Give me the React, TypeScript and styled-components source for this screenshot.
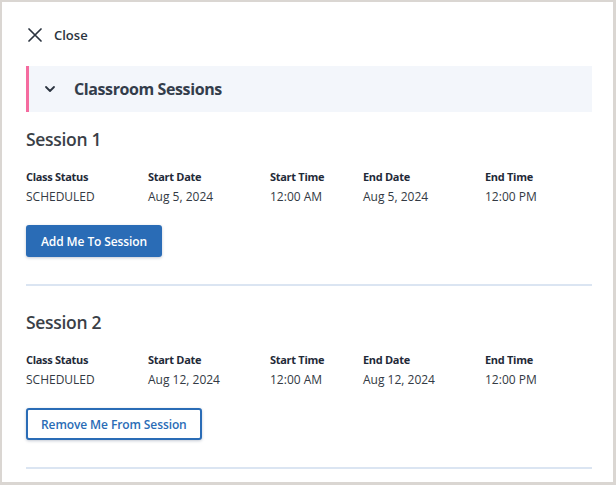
import React from 'react';
import styled, { createGlobalStyle } from 'styled-components';

interface Session {
  title: string;
  status: string;
  startDate: string;
  startTime: string;
  endDate: string;
  endTime: string;
  enrolled: boolean;
}

const sessions: Session[] = [
  {
    title: 'Session 1',
    status: 'SCHEDULED',
    startDate: 'Aug 5, 2024',
    startTime: '12:00 AM',
    endDate: 'Aug 5, 2024',
    endTime: '12:00 PM',
    enrolled: false,
  },
  {
    title: 'Session 2',
    status: 'SCHEDULED',
    startDate: 'Aug 12, 2024',
    startTime: '12:00 AM',
    endDate: 'Aug 12, 2024',
    endTime: '12:00 PM',
    enrolled: true,
  },
];

export default function App() {
  return (
    <>
      <GlobalStyle />
      <Panel>
        <CloseButton type="button">
          <svg width="14" height="14" viewBox="0 0 14 14" fill="none">
            <path d="M1 1L13 13M13 1L1 13" stroke="#2b3440" strokeWidth="1.7" strokeLinecap="round" />
          </svg>
          <span>Close</span>
        </CloseButton>

        <AccordionHeader>
          <svg width="12" height="8" viewBox="0 0 12 8" fill="none">
            <path d="M2 2L6 6L10 2" stroke="#2b3440" strokeWidth="1.8" strokeLinecap="round" strokeLinejoin="round" />
          </svg>
          <h2>Classroom Sessions</h2>
        </AccordionHeader>

        {sessions.map((s, i) => (
          <SessionBlock key={s.title} first={i === 0}>
            <SessionTitle>{s.title}</SessionTitle>
            <InfoGrid>
              <Label>Class Status</Label>
              <Label>Start Date</Label>
              <Label>Start Time</Label>
              <Label>End Date</Label>
              <Label>End Time</Label>
              <Value>{s.status}</Value>
              <Value>{s.startDate}</Value>
              <Value>{s.startTime}</Value>
              <Value>{s.endDate}</Value>
              <Value>{s.endTime}</Value>
            </InfoGrid>
            <ActionButton type="button" outline={s.enrolled}>
              {s.enrolled ? 'Remove Me From Session' : 'Add Me To Session'}
            </ActionButton>
          </SessionBlock>
        ))}
      </Panel>
    </>
  );
}

const GlobalStyle = createGlobalStyle`
  html, body {
    margin: 0;
    padding: 0;
    background: #ffffff;
  }
  body {
    font-family: 'Open Sans', 'Noto Sans', sans-serif;
    color: #2b3440;
  }
  * {
    box-sizing: border-box;
  }
`;

const Panel = styled.div`
  width: 616px;
  height: 485px;
  border: 2px solid #dad6d2;
  border-right-width: 3px;
  border-bottom-width: 3px;
  padding: 23px 21px 0 24px;
  overflow: hidden;
  background: #fff;
`;

const CloseButton = styled.button`
  display: flex;
  align-items: center;
  gap: 12px;
  border: none;
  background: none;
  padding: 0 0 0 2px;
  height: 20px;
  font-family: inherit;
  font-size: 13px;
  font-weight: 600;
  color: #2b3440;
  cursor: pointer;
`;

const AccordionHeader = styled.div`
  display: flex;
  align-items: center;
  gap: 18px;
  height: 46px;
  margin-top: 21px;
  padding-left: 15px;
  background: #f3f6fb;
  border-left: 3px solid #f56b9f;

  h2 {
    margin: 0;
    font-size: 16px;
    letter-spacing: -0.4px;
    font-weight: 700;
    color: #333d4b;
  }
`;

const SessionBlock = styled.section<{ first: boolean }>`
  padding-top: ${(p) => (p.first ? '15px' : '24px')};
  padding-bottom: 27px;
  border-bottom: 2px solid #dbe5f2;
`;

const SessionTitle = styled.h3`
  margin: 0;
  font-size: 17.5px;
  line-height: 24px;
  font-weight: 600;
  letter-spacing: -0.3px;
  color: #3a3f47;
`;

const InfoGrid = styled.div`
  display: grid;
  grid-template-columns: 122px 122px 93px 122px auto;
  row-gap: 4px;
  margin-top: 18px;
`;

const Label = styled.div`
  font-size: 11px;
  line-height: 16px;
  font-weight: 700;
  letter-spacing: -0.3px;
  color: #1f2a38;
`;

const Value = styled.div`
  font-size: 12px;
  line-height: 16px;
  color: #333a44;
`;

const ActionButton = styled.button<{ outline: boolean }>`
  display: block;
  margin-top: 20px;
  height: 32px;
  padding: 0 13px;
  border-radius: 3px;
  border: 2px solid #2a6cb6;
  background: ${(p) => (p.outline ? '#ffffff' : '#2a6cb6')};
  color: ${(p) => (p.outline ? '#2a6cb6' : '#ffffff')};
  font-family: inherit;
  font-size: 12px;
  font-weight: 600;
  letter-spacing: -0.1px;
  box-shadow: 0 1px 3px rgba(20, 40, 80, 0.25);
  cursor: pointer;
`;
